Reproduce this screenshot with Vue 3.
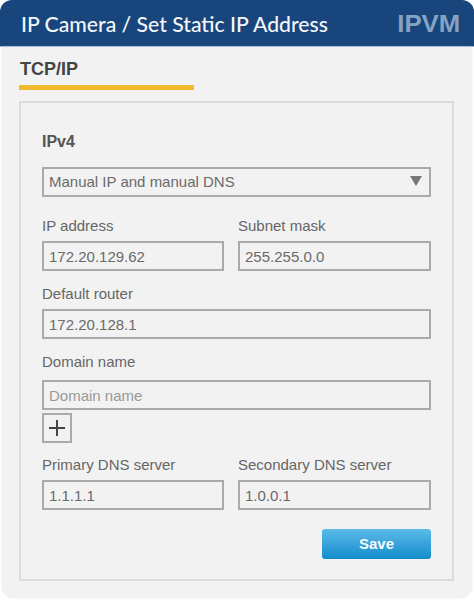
<script setup>
const rowA = [
  { label: 'IP address', value: '172.20.129.62' },
  { label: 'Subnet mask', value: '255.255.0.0' },
]
const rowB = [
  { label: 'Primary DNS server', value: '1.1.1.1' },
  { label: 'Secondary DNS server', value: '1.0.0.1' },
]
</script>

<template>
  <div class="page">
    <header class="header">
      <h1 class="title">IP Camera / Set Static IP Address</h1>
      <span class="logo">IPVM</span>
    </header>
    <div class="body">
      <div class="tab">TCP/IP</div>
      <section class="panel">
        <h2 class="section">IPv4</h2>
        <div class="box select">
          <span>Manual IP and manual DNS</span>
          <span class="caret"></span>
        </div>
        <div class="row first-row">
          <div v-for="f in rowA" :key="f.label" class="field">
            <div class="label">{{ f.label }}</div>
            <div class="box">{{ f.value }}</div>
          </div>
        </div>
        <div class="field stacked">
          <div class="label">Default router</div>
          <div class="box">172.20.128.1</div>
        </div>
        <div class="field stacked domain">
          <div class="label">Domain name</div>
          <div class="box placeholder">Domain name</div>
        </div>
        <div class="plus">
          <svg width="20" height="20" viewBox="0 0 20 20">
            <path d="M10 2V18M2 10H18" stroke="#444" stroke-width="2" fill="none" />
          </svg>
        </div>
        <div class="row dns-row">
          <div v-for="f in rowB" :key="f.label" class="field">
            <div class="label">{{ f.label }}</div>
            <div class="box">{{ f.value }}</div>
          </div>
        </div>
        <div class="actions">
          <button class="save" type="button">Save</button>
        </div>
      </section>
    </div>
  </div>
</template>

<style>
html, body { margin: 0; background: #fff; }
</style>

<style scoped>
.page {
  width: 474px;
  height: 600px;
  font-family: "Liberation Sans", Arial, sans-serif;
}
.header {
  height: 47px;
  padding: 2px 14px 0 21px;
  background: #17457c;
  border-radius: 12px 12px 0 0;
  display: flex;
  align-items: center;
  justify-content: space-between;
  border-bottom: 1px solid #8fb0d2;
  box-sizing: border-box;
}
.title {
  margin: 0;
  font: 500 21.2px/26px Lato, sans-serif;
  color: #f4f6f9;
  white-space: nowrap;
}
.logo {
  font: 700 23px/26px "Liberation Sans", sans-serif;
  color: #86a2c1;
  transform: scaleX(1.12);
  transform-origin: right center;
}
.body {
  height: 551px;
  margin: 0 2px;
  padding: 0 18px 0 17px;
  box-sizing: border-box;
  background: #f2f2f2;
  border-radius: 0 0 12px 12px;
  box-shadow: 0 0 2px #e4e4e4;
}
.tab {
  width: 175px;
  height: 43px;
  box-sizing: border-box;
  padding: 12px 0 0 1px;
  border-bottom: 5px solid #f1b92e;
  font: 700 18px/20px "Liberation Sans", sans-serif;
  color: #444;
}
.panel {
  margin-top: 11px;
  height: 480px;
  box-sizing: border-box;
  border: 2px solid #dcdcdc;
  padding: 29px 21px 0;
}
.section {
  margin: 0;
  font: 700 16px/20px "Liberation Sans", sans-serif;
  color: #555;
}
.box {
  height: 30px;
  box-sizing: border-box;
  border: 2px solid #aaa;
  padding: 0 5px;
  display: flex;
  align-items: center;
  font-size: 15px;
  color: #6a6a6a;
}
.select {
  margin-top: 15px;
  justify-content: space-between;
  padding-right: 7px;
  padding-bottom: 2px;
}
.caret {
  width: 0;
  height: 0;
  border-left: 6px solid transparent;
  border-right: 6px solid transparent;
  border-top: 10px solid #777;
}
.row {
  display: grid;
  grid-template-columns: 182px 193px;
  gap: 14px;
}
.first-row { margin-top: 19px; }
.dns-row { margin-top: 12px; }
.label {
  height: 25px;
  box-sizing: border-box;
  font-size: 15px;
  line-height: 20px;
  color: #666;
}
.stacked { margin-top: 12px; }
.stacked .label { height: 26px; padding-top: 1px; }
.domain { margin-top: 12px; }
.domain .label { height: 29px; }
.placeholder { color: #999; }
.plus {
  width: 30px;
  height: 30px;
  margin-top: 3px;
  box-sizing: border-box;
  border: 2px solid #aaa;
  display: flex;
  align-items: center;
  justify-content: center;
}
.actions {
  margin-top: 19px;
  display: flex;
  justify-content: flex-end;
}
.save {
  width: 109px;
  height: 30px;
  border: 0;
  border-radius: 3px;
  background: linear-gradient(#5cbbe8, #138ccb);
  color: #f4fbff;
  font: 700 15px/20px "Liberation Sans", sans-serif;
  padding: 0;
}
</style>
